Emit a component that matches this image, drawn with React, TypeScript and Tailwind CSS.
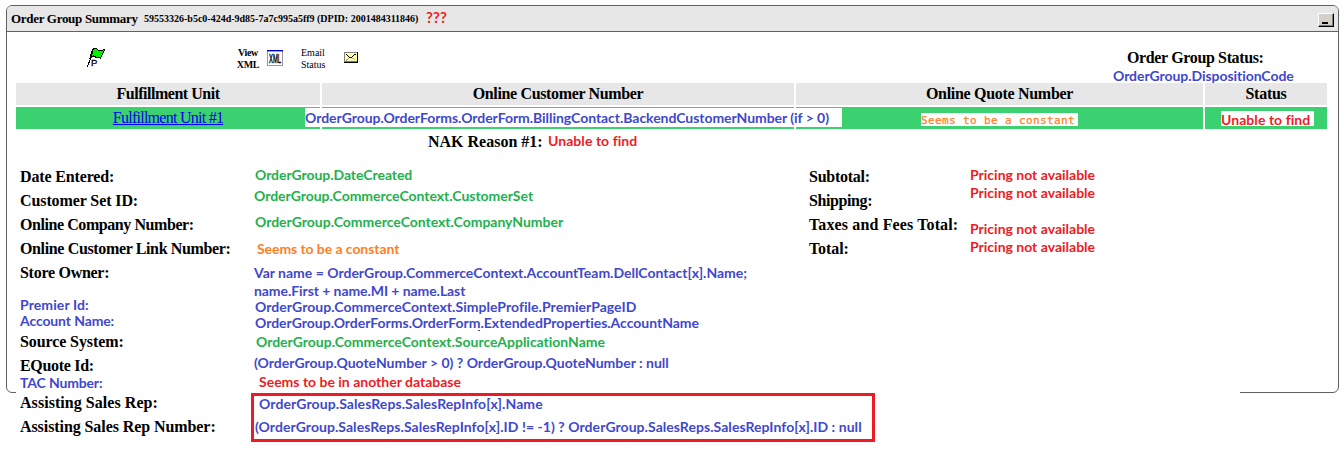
import type { ReactNode } from "react";

const serif = "font-['Liberation_Serif','Times_New_Roman',serif]";
const note = "font-['Lato',sans-serif] font-bold text-[14px] leading-4 whitespace-nowrap [font-variant-ligatures:none]";

function Label({ children, className = "" }: { children: ReactNode; className?: string }) {
  return <div className={`h-6 text-[16px] leading-6 font-bold whitespace-nowrap ${className}`}>{children}</div>;
}

function Note({ children, className }: { children: ReactNode; className: string }) {
  return <div className={`${note} h-4 ${className}`}>{children}</div>;
}

function FlagIcon() {
  return (
    <svg width="20" height="21" viewBox="0 0 20 21" shapeRendering="crispEdges">
      <path d="M6.500 2.500l2-1h2l2 2h3l3-1-1 3-2 3-1 2.500-2-1h-3l-2-1-2 1-1.500 1z" fill="#00f000" stroke="#000" strokeWidth="1" />
      <path d="M7.500 1.500L5 11L1 20" fill="none" stroke="#000" strokeWidth="1" />
      <text x="5" y="19" fontSize="9.500" fontFamily="Liberation Sans" fill="#000" stroke="#000" strokeWidth="0.3">P</text>
    </svg>
  );
}

function XmlIcon() {
  return (
    <svg width="16" height="16" viewBox="0 0 16 16" className="overflow-visible">
      <rect x="0.5" y="0.5" width="15" height="15" fill="#fff" stroke="#999" />
      <rect width="16" height="1.4" fill="#0000d0" />
      <text x="2" y="13" fontSize="13" fontFamily="Liberation Sans" textLength="12" lengthAdjust="spacingAndGlyphs" fill="#000" stroke="#000" strokeWidth="0.5">XML</text>
    </svg>
  );
}

function MailIcon() {
  return (
    <svg width="14" height="11" viewBox="0 0 14 11" shapeRendering="crispEdges">
      <rect width="14" height="11" fill="#000" />
      <rect width="13" height="10" fill="#808080" />
      <rect x="1" y="1" width="12" height="9" fill="#ffff9c" />
      <path d="M2 1h9v1H2zM3 8h7v1H3z" fill="#fff" />
      <path d="M1.500 2.500l1 0 2 2 1 1h2l1-1 2-2h1" fill="none" stroke="#000" strokeWidth="1" />
      <path d="M2 8.500l3-2.500M11.500 8.500L8.500 6" fill="none" stroke="#b0b060" strokeWidth="1" />
      <path d="M1 9.500h12" stroke="#808040" />
    </svg>
  );
}

const head = "flex h-[22px] items-center justify-center bg-[#e7e7e7] text-[16px] font-bold";
const cell = "h-[22px] bg-[#3bd070]";
const green = "text-[#22b14c]";
const blue = "text-[#3f48cc]";
const red = "text-[#ed1c24]";

export default function App() {
  return (
    <div className={`${serif} h-[474px] w-[1342px] overflow-hidden bg-white pt-[5px] pl-[6px] text-black`}>
      <div className="relative h-[388px] w-[1333px] rounded-[6px] border border-[#606066]">
        <header className="flex h-[26px] items-center rounded-t-[5px] border-b border-[#606066] bg-[#e7e7e7] pl-1 font-bold">
          <h1 className="w-[133px] text-[13px] leading-5 tracking-[-0.3px] whitespace-nowrap">Order Group Summary</h1>
          <span className="w-[282px] pt-px text-[10px] leading-5 whitespace-nowrap">59553326-b5c0-424d-9d85-7a7c995a5ff9 (DPID: 2001484311846)</span>
          <span className="-mt-1 font-['Lato',sans-serif] text-[15px] leading-4 tracking-[0.1px] text-[#ed1c24]">???</span>
          <button aria-label="Minimize" className="mt-[3px] mr-[4px] ml-auto flex h-[14px] w-4 items-end justify-center border border-t-white border-r-black border-b-black border-l-white bg-[#d4d0c8] pr-0.5 pb-0.5 shadow-[inset_-1px_-1px_#808080]">
            <span className="h-0.5 w-1.5 bg-black" />
          </button>
        </header>

        <div className="flex h-[51px] items-start pl-[79px]">
          <div className="mt-[15px] w-[143px]"><FlagIcon /></div>
          <div className="mt-[15px] w-[38px] text-center text-[10px] leading-3 font-bold tracking-[-0.3px]">View<br />XML</div>
          <div className="mt-[18px] w-[30px]"><XmlIcon /></div>
          <div className="mt-[15px] w-[47px] pl-1 text-[10px] leading-3">Email<br />Status</div>
          <div className="mt-5"><MailIcon /></div>
          <div className="mt-[15px] mr-[43px] ml-auto flex w-[181px] flex-col">
            <span className="h-[22px] pl-[13px] text-[16px] leading-[22px] font-bold tracking-[-0.36px] whitespace-nowrap">Order Group Status:</span>
            <Note className={`${blue} z-10 -mt-px -ml-px tracking-[-0.06px]`}>OrderGroup.DispositionCode</Note>
          </div>
        </div>

        <div className="relative ml-[9px] grid w-[1311px] grid-cols-[304px_472px_407px_122px] gap-0.5">
          <div className={`${head} tracking-[-0.47px]`}>Fulfillment Unit</div>
          <div className={`${head} tracking-[-0.35px]`}>Online Customer Number</div>
          <div className={`${head} tracking-[-0.3px]`}>Online Quote Number</div>
          <div className={`${head} tracking-[-0.25px]`}>Status</div>
          <div className={`${cell} flex items-center justify-center text-[16px] tracking-[-0.74px]`}>
            <a href="#unit" className="text-[#0000ee] underline">Fulfillment Unit #1</a>
          </div>
          <div className={cell} />
          <div className={`${cell} pt-1.5 pl-[125px]`}>
            <div className="h-[13px] w-[157px] bg-white font-['DejaVu_Sans_Mono',monospace] text-[11px] leading-[15px] tracking-[0.38px] whitespace-nowrap text-[#ff7f27] [-webkit-text-stroke:0.25px_#ff7f27]">Seems to be a constant</div>
          </div>
          <div className={`${cell} pt-1 pl-4`}>
            <div className="h-[15px] w-[93px] bg-white font-['Lato',sans-serif] text-[14px] leading-[18px] font-bold tracking-[0.06px] whitespace-nowrap text-[#ed1c24]">Unable to find</div>
          </div>
          <div className="absolute top-[25px] left-[289px] h-[19px] w-[537px] bg-white font-['Lato',sans-serif] text-[14px] leading-[19px] font-bold tracking-[-0.045px] whitespace-nowrap text-[#3f48cc] [font-variant-ligatures:none]">
            OrderGroup.OrderForms.OrderForm.BillingContact.BackendCustomerNumber (if &gt; 0)
          </div>
        </div>

        <div className="flex h-9 pl-[421px]">
          <Label className="mt-px w-[120px]">NAK Reason #1:</Label>
          <Note className={`${red} mt-1 tracking-[0.06px]`}>Unable to find</Note>
        </div>

        <div className="flex pl-[13px]">
          <div className="flex w-[231px] flex-col">
            <Label className="tracking-[-0.15px]">Date Entered:</Label>
            <Label className="tracking-[-0.1px]">Customer Set ID:</Label>
            <Label className="tracking-[-0.43px]">Online Company Number:</Label>
            <Label className="tracking-[-0.36px]">Online Customer Link Number:</Label>
            <Label className="tracking-[-0.28px]">Store Owner:</Label>
            <Note className={`${blue} mt-3 tracking-[0.1px]`}>Premier Id:</Note>
            <Note className={`${blue} tracking-[-0.12px]`}>Account Name:</Note>
            <Label className="mt-px tracking-[-0.1px]">Source System:</Label>
            <Label className="tracking-[-0.3px]">EQuote Id:</Label>
            <Note className={`${blue} -mt-[3px] tracking-[-0.15px]`}>TAC Number:</Note>
            <div className="z-10 -ml-1 w-[1224px] bg-white pl-1">
              <Label className="tracking-[0.05px]">Assisting Sales Rep:</Label>
              <Label className="tracking-[-0.08px]">Assisting Sales Rep Number:</Label>
            </div>
          </div>

          <div className="relative z-20 flex w-[558px] flex-col pt-0.5">
            <Note className={`${green} pl-1 tracking-[-0.06px]`}>OrderGroup.DateCreated</Note>
            <Note className={`${green} mt-[5px] pl-[3px] tracking-[-0.03px]`}>OrderGroup.CommerceContext.CustomerSet</Note>
            <Note className={`${green} mt-[10px] pl-1 tracking-[-0.02px]`}>OrderGroup.CommerceContext.CompanyNumber</Note>
            <Note className="mt-[11px] pl-1.5 tracking-[-0.07px] text-[#ff7f27]">Seems to be a constant</Note>
            <Note className={`${blue} mt-2 pl-[3px]`}>Var name = OrderGroup.CommerceContext.AccountTeam.DellContact[x].Name;</Note>
            <Note className={`${blue} mt-0.5 pl-[3px] tracking-[-0.07px]`}>name.First + name.MI + name.Last</Note>
            <Note className={`${blue} pl-1 tracking-[0.04px]`}>OrderGroup.CommerceContext.SimpleProfile.PremierPageID</Note>
            <Note className={`${blue} pl-1 tracking-[-0.02px]`}>OrderGroup.OrderForms.OrderForm.ExtendedProperties.AccountName</Note>
            <span className="absolute top-[165px] left-[227px] h-px w-0.5 bg-[#3f48cc]" />
            <Note className={`${green} mt-[3px] pl-[5px] tracking-[-0.02px]`}>OrderGroup.CommerceContext.SourceApplicationName</Note>
            <Note className={`${blue} mt-[5px] pl-[3px]`}>(OrderGroup.QuoteNumber &gt; 0) ? OrderGroup.QuoteNumber : null</Note>
            <Note className={`${red} mt-[3px] pl-2`}>Seems to be in another database</Note>
            <div className="mt-[3px] flex h-[49px] w-[624px] flex-col border-[3px] border-[#ed1c24]">
              <Note className={`${blue} pl-[5px] tracking-[0.09px]`}>OrderGroup.SalesReps.SalesRepInfo[x].Name</Note>
              <Note className={`${blue} mt-[7px] pl-px tracking-[0.05px]`}>(OrderGroup.SalesReps.SalesRepInfo[x].ID != -1) ? OrderGroup.SalesReps.SalesRepInfo[x].ID : null</Note>
            </div>
          </div>

          <div className="flex w-[161px] flex-col">
            <Label className="tracking-[-0.25px]">Subtotal:</Label>
            <Label className="tracking-[-0.4px]">Shipping:</Label>
            <Label className="tracking-[0.13px]">Taxes and Fees Total:</Label>
            <Label className="tracking-[-0.1px]">Total:</Label>
          </div>
          <div className="flex flex-col pt-0.5">
            <Note className={red}>Pricing not available</Note>
            <Note className={`${red} mt-0.5`}>Pricing not available</Note>
            <Note className={`${red} mt-5`}>Pricing not available</Note>
            <Note className={`${red} mt-0.5`}>Pricing not available</Note>
          </div>
        </div>
      </div>
    </div>
  );
}
